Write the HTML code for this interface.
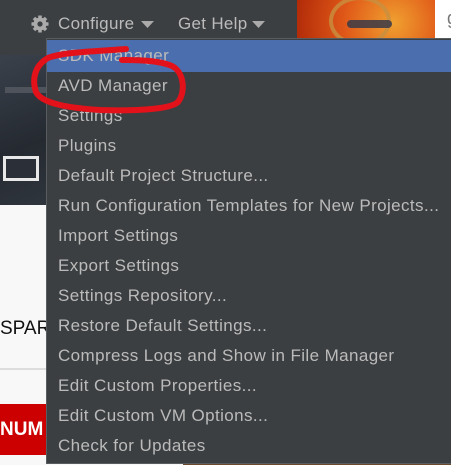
<!DOCTYPE html>
<html><head><meta charset="utf-8"><style>
*{margin:0;padding:0;box-sizing:border-box}
body{width:451px;height:465px;overflow:hidden;position:relative;background:#f8f8f8;font-family:"Liberation Sans",sans-serif}
.abs{position:absolute}
.menu{left:46px;top:38px;width:405px;height:426px;background:#3c3f41;border:1px solid #5a5d5f;border-right:none}
.item{position:absolute;left:11px;font-size:17px;letter-spacing:0.4px;color:#bbbbbb;height:30px;line-height:30px;white-space:nowrap}
</style></head><body>
<div class="abs" style="left:0;top:0;width:297px;height:55px;background:#3c3f41"></div>
<div class="abs" style="left:0;top:55px;width:46px;height:150px;background:linear-gradient(160deg,#3a414b,#252a31 60%,#2f353d)"></div>
<div class="abs" style="left:5px;top:87px;width:41px;height:6px;background:#4f545c"></div>
<div class="abs" style="left:3px;top:156px;width:36px;height:25px;border:3px solid #e8e8e8;background:#2b3038"></div>
<div class="abs" style="left:0;top:318px;font-size:19px;color:#111">SPAR</div>
<div class="abs" style="left:0;top:368px;width:46px;height:2px;background:#ddd"></div>
<div class="abs" style="left:0;top:404px;width:46px;height:51px;background:#cc0000"></div>
<div class="abs" style="left:0;top:419px;font-size:19px;font-weight:bold;color:#fff">NUM</div>
<div class="abs" style="left:183px;top:459px;width:268px;height:6px;background:#6a4a2a"></div>
<div class="abs" style="left:297px;top:0;width:138px;height:38px;background:radial-gradient(circle at 70% 60%,#f0a030,#e05818 50%,#b02a08);overflow:hidden">
<div class="abs" style="left:32px;top:-4px;width:62px;height:50px;border:4px solid #c89040;border-radius:50%;opacity:.8"></div>
<div class="abs" style="left:50px;top:20px;width:45px;height:8px;background:#3a3a48;border-radius:4px;opacity:.85"></div>
</div>
<div class="abs" style="left:435px;top:0;width:16px;height:38px;background:#fff;color:#777;font-size:18px;padding:8px 0 0 12px;overflow:hidden">g</div>
<svg class="abs" style="left:30px;top:14px" width="20" height="20" viewBox="0 0 20 20"><g fill="#aaa"><circle cx="10" cy="10" r="6.5"/><g stroke="#aaa" stroke-width="3.6"><line x1="10" y1="1.5" x2="10" y2="18.5"/><line x1="1.5" y1="10" x2="18.5" y2="10"/><line x1="4" y1="4" x2="16" y2="16"/><line x1="16" y1="4" x2="4" y2="16"/></g></g><circle cx="10" cy="10" r="2.6" fill="#3c3f41"/></svg>
<div class="abs" style="left:58px;top:14px;font-size:17px;letter-spacing:0.3px;color:#bbb">Configure</div>
<svg class="abs" style="left:141px;top:21px" width="13" height="8"><path d="M0 0H13L6.5 7Z" fill="#aaa"/></svg>
<div class="abs" style="left:178px;top:14px;font-size:17px;letter-spacing:0.3px;color:#bbb">Get Help</div>
<svg class="abs" style="left:252px;top:21px" width="13" height="8"><path d="M0 0H13L6.5 7Z" fill="#aaa"/></svg>
<div class="abs menu">
<div class="abs" style="left:0;top:1px;width:404px;height:32px;background:#4b6eaf"></div>
<div class="item" style="top:2px">SDK Manager</div>
<div class="item" style="top:32px">AVD Manager</div>
<div class="item" style="top:62px">Settings</div>
<div class="item" style="top:92px">Plugins</div>
<div class="item" style="top:122px">Default Project Structure...</div>
<div class="item" style="top:152px">Run Configuration Templates for New Projects...</div>
<div class="item" style="top:182px">Import Settings</div>
<div class="item" style="top:212px">Export Settings</div>
<div class="item" style="top:242px">Settings Repository...</div>
<div class="item" style="top:272px">Restore Default Settings...</div>
<div class="item" style="top:302px">Compress Logs and Show in File Manager</div>
<div class="item" style="top:332px">Edit Custom Properties...</div>
<div class="item" style="top:362px">Edit Custom VM Options...</div>
<div class="item" style="top:392px">Check for Updates</div>
</div>
<svg class="abs" style="left:0;top:0" width="451" height="465"><path d="M126 49 C100 51 62 52 48 58 C34 66 32 80 36 92 C42 104 70 108 100 110 C130 111 170 110 178 102 C186 92 184 72 172 66 C158 60 135 60 122 60" fill="none" stroke="#e3121a" stroke-width="6" stroke-linecap="round"/></svg>
</body></html>
